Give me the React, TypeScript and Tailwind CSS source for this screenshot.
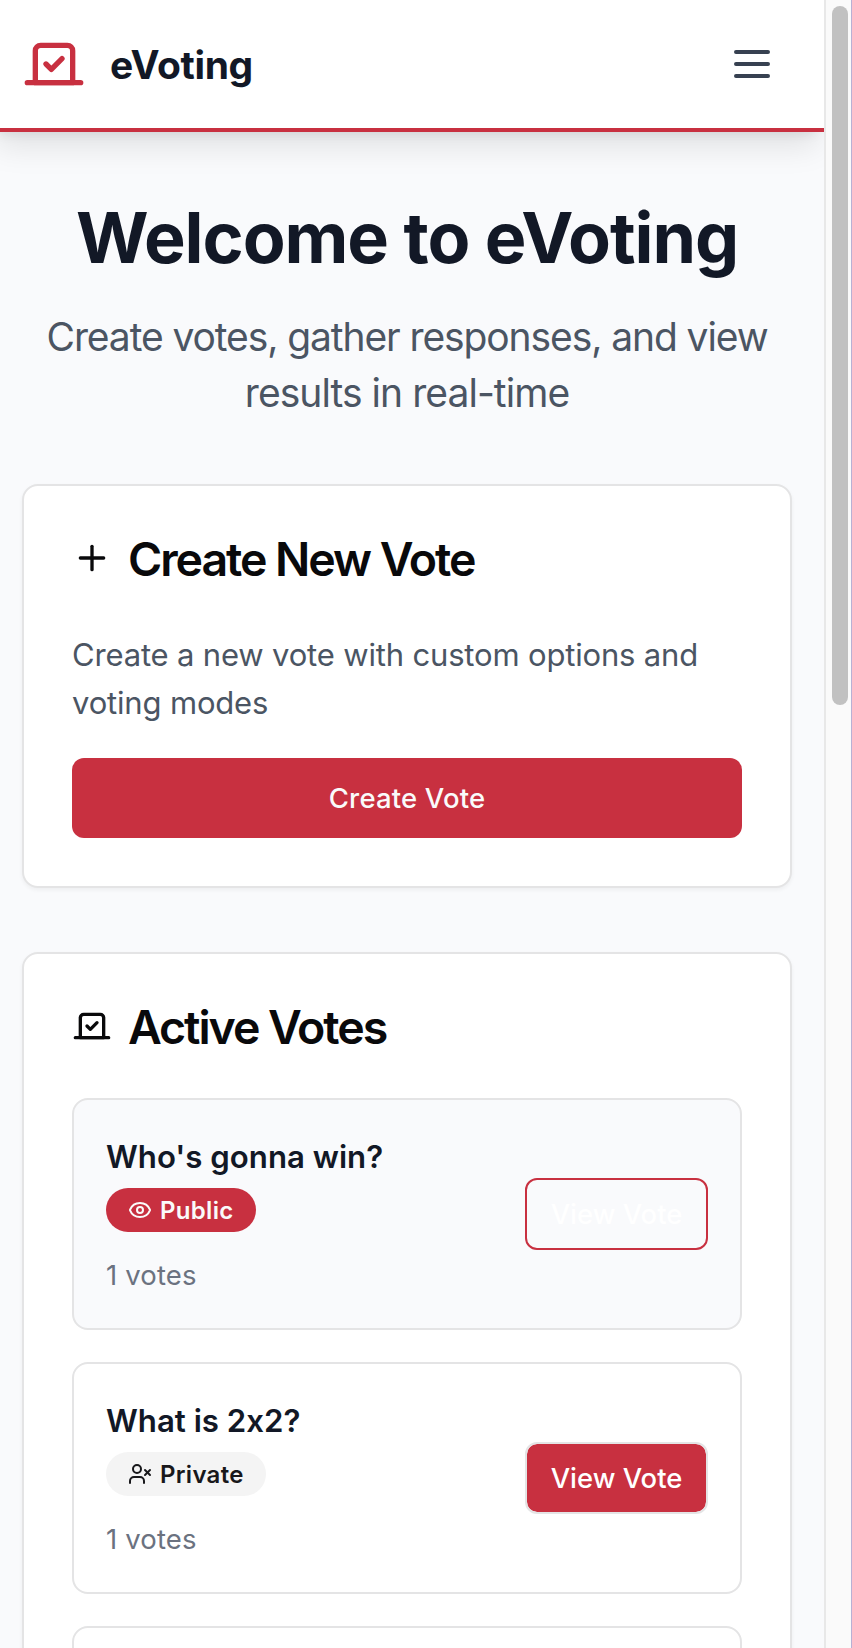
import React from 'react';
import { Eye, Plus, UserX, Vote } from 'lucide-react';

type VoteItem = {
  title: string;
  isPublic: boolean;
  votes: number;
  hovered?: boolean;
};

const activeVotes: VoteItem[] = [
  { title: "Who's gonna win?", isPublic: true, votes: 1, hovered: true },
  { title: 'What is 2x2?', isPublic: false, votes: 1 },
  { title: '', isPublic: true, votes: 0 },
];

function MenuIcon() {
  return (
    <svg className="size-12" viewBox="0 0 24 24" fill="none" stroke="currentColor" strokeWidth="2" strokeLinecap="round">
      <path d="M4 6h16M4 12h16M4 18h16" />
    </svg>
  );
}

function Header() {
  return (
    <header className="relative flex h-[132px] items-center justify-between border-b-4 border-[#c83040] bg-white px-8 shadow-[0_20px_30px_-6px_rgb(0_0_0/0.1),0_8px_12px_-8px_rgb(0_0_0/0.1)]">
      <div className="flex items-center gap-6">
        <Vote className="size-16 text-[#c83040]" />
        <span className="pt-px text-[39px] leading-[56px] font-bold tracking-[-0.34px] text-[#121826]">eVoting</span>
      </div>
      <button className="p-4 text-[#374151]" aria-label="Menu">
        <MenuIcon />
      </button>
    </header>
  );
}

function Card({ icon, title, children }: { icon: React.ReactNode; title: string; children: React.ReactNode }) {
  return (
    <section className="rounded-2xl border-2 border-[#e4e4e5] bg-white p-[48px] text-[#09090b] shadow-[0_2px_4px_0_rgb(0_0_0/0.05)]">
      <h2 className="mb-12 flex h-12 items-center gap-4">
        {icon}
        <span className="pt-0.5 text-[46.5px] leading-[48px] font-semibold tracking-[-2.06px]">{title}</span>
      </h2>
      {children}
    </section>
  );
}

function Badge({ isPublic }: { isPublic: boolean }) {
  return (
    <div
      className={
        'flex h-11 items-center gap-2 rounded-full px-[22px] text-[24px] leading-8 font-semibold tracking-[0.3px] ' +
        (isPublic ? 'bg-[#c83040] text-[#fafafa]' : 'bg-[#f4f4f4] text-[#18181b]')
      }
    >
      {isPublic ? <Eye className="size-6" /> : <UserX className="size-6" />}
      <span className="pt-px">{isPublic ? 'Public' : 'Private'}</span>
    </div>
  );
}

function VoteRow({ item }: { item: VoteItem }) {
  return (
    <li
      className={
        'flex h-[232px] items-center justify-between rounded-2xl border-2 border-[#e4e4e5] px-8 ' +
        (item.hovered ? 'bg-[#f9fafc]' : 'bg-white')
      }
    >
      {item.title && (
        <>
          <div className="flex flex-col items-start">
            <h3 className="h-12 pt-px text-[31.2px] leading-[48px] font-semibold text-[#121826]">{item.title}</h3>
            <div className="mt-2 mb-[23px]">
              <Badge isPublic={item.isPublic} />
            </div>
            <p className="mb-px text-[27.5px] leading-[40px] tracking-[0.15px] text-[#6b7280]">{item.votes} votes</p>
          </div>
          <button
            className={
              'h-[72px] w-[183px] rounded-xl border-2 pt-0.5 text-center text-[27.4px] font-medium ' +
              (item.hovered
                ? 'border-[#c83040] bg-transparent text-white'
                : 'border-[#e4e4e5] bg-[#c83040] bg-clip-padding text-white')
            }
          >
            View Vote
          </button>
        </>
      )}
    </li>
  );
}

function Scrollbar() {
  return (
    <div className="flex w-7 shrink-0 border-r border-l-2 border-r-[#b7b0d4] border-l-[#e8e8e8] bg-[#fafafa] pt-1.5 pl-1.5">
      <div className="h-[699px] w-4 rounded-full bg-[#c1c1c1]" />
    </div>
  );
}

export default function App() {
  return (
    <div className="flex h-[1648px] w-[852px] overflow-hidden bg-[#f9fafc] font-['Inter',sans-serif] [font-feature-settings:'calt'_0]">
      <div className="flex w-[824px] shrink-0 justify-end overflow-hidden">
        <div className="w-[834px] shrink-0">
          <Header />
          <main className="px-8 pt-16">
            <div className="text-center">
              <h1 className="h-20 pt-0.5 text-[70px] leading-[80px] font-bold tracking-[-1.06px] text-[#121826]">
                Welcome to eVoting
              </h1>
              <p className="mt-8 mb-16 h-28 pt-px text-[39px] leading-[56px] tracking-[-1.1px] text-[#4b5563]">
                Create votes, gather responses, and view
                <br />
                <span className="tracking-[-0.95px]">results in real-time</span>
              </p>
            </div>
            <div className="flex flex-col gap-16">
              <Card icon={<Plus className="size-10" />} title="Create New Vote">
                <p className="mb-8 h-24 pt-px text-[31px] leading-[48px] tracking-[-0.17px] text-[#4b5563]">
                  Create a new vote with custom options and voting modes
                </p>
                <button className="h-20 w-full rounded-xl bg-[#c83040] pt-0.5 text-[27.5px] font-medium tracking-[0.15px] text-[#fafafa]">
                  Create Vote
                </button>
              </Card>
              <Card icon={<Vote className="size-10" />} title="Active Votes">
                <ul className="flex flex-col gap-8">
                  {activeVotes.map((item, i) => (
                    <VoteRow key={i} item={item} />
                  ))}
                </ul>
              </Card>
            </div>
          </main>
        </div>
      </div>
      <Scrollbar />
    </div>
  );
}
